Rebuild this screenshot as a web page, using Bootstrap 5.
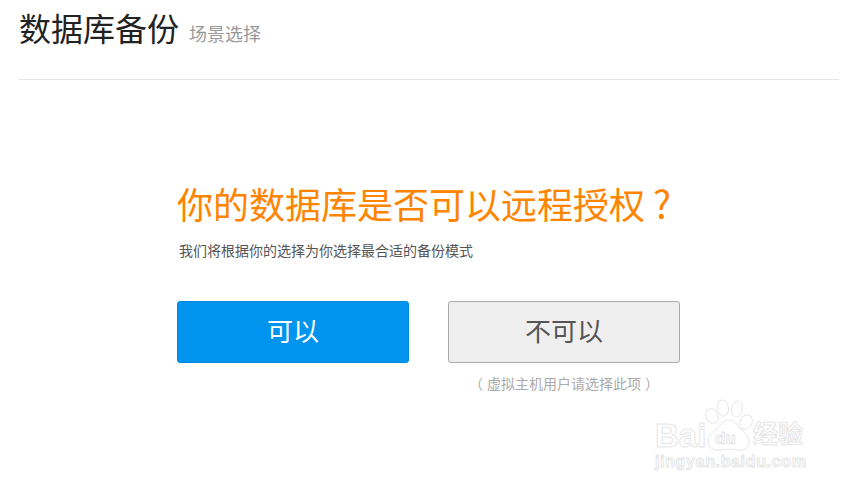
<!DOCTYPE html>
<html lang="zh-CN">
  <head>
    <meta charset="UTF-8" />
    <title>数据库备份</title>
    <link href="https://cdn.jsdelivr.net/npm/bootstrap@5.3.3/dist/css/bootstrap.min.css" rel="stylesheet" />
    <style>
      body {
        background: #fff;
        height: 491px;
        overflow: hidden;
        font-family: "Liberation Sans", "Noto Sans CJK SC", sans-serif;
      }
      .page-wrap { padding: 0 14px 0 19px; }
      .page-head {
        height: 80px;
        padding-top: 10px;
        border-bottom: 1px solid #e5e5e5;
      }
      .page-head h1 { font-size: 32px; line-height: 40px; color: #222; font-weight: 400; margin: 0; }
      .page-head span { font-size: 18px; color: #999; margin-left: 10px; }
      .ask-box { width: 503px; margin: 101px 0 0 158px; }
      .ask-box h2 { height: 52px; font-size: 36px; line-height: 52px; color: #ff8400; font-weight: 400; margin: 0; white-space: nowrap; }
      .ask-box h2 span { font-family: "Noto Sans CJK SC", sans-serif; font-size: 38px; line-height: 1; margin-left: 8px; }
      .ask-tip { font-size: 14px; line-height: 20px; color: #555; margin: 8px 0 0 2px; white-space: nowrap; }
      .choice-row { margin-top: 40px; gap: 39px; }
      .choice { width: 232px; }
      .choice .btn { width: 232px; height: 62px; font-size: 26px; padding: 0; border-radius: 3px; }
      .btn-yes, .btn-yes:hover { background: #0094ee; border-color: #0088dd; color: #fff; }
      .btn-no, .btn-no:hover { background: #efefef; border-color: #aaa; color: #555; }
      .choice-note { font-size: 14px; line-height: 18px; color: #aaa; margin-top: 12px; text-align: center; white-space: nowrap; }
      .wm { position: absolute; left: 654px; top: 399px; width: 160px; height: 75px; }
      .wm span { position: absolute; font-weight: 700; color: #fff; -webkit-text-stroke: 1px #e6e6e6; line-height: 1; white-space: nowrap; }
      .wm svg { position: absolute; left: 0; top: 0; }
      .wm-bai { left: 1px; top: 20px; font-size: 33px; }
      .wm-du { left: 61px; top: 31px; font-size: 17px; }
      .wm-jy { left: 99px; top: 23px; font-size: 25px; }
      .wm-url { left: 1px; top: 55px; font-size: 16px; letter-spacing: .65px; }
    </style>
  </head>
  <body>
    <div class="page-wrap">
      <div class="page-head d-flex align-items-start">
        <h1>数据库备份<span>场景选择</span></h1>
      </div>
      <div class="ask-box">
        <h2>你的数据库是否可以远程授权<span>?</span></h2>
        <p class="ask-tip">我们将根据你的选择为你选择最合适的备份模式</p>
        <div class="d-flex choice-row">
          <div class="choice"><button type="button" class="btn btn-yes">可以</button></div>
          <div class="choice">
            <button type="button" class="btn btn-no">不可以</button>
            <div class="choice-note">（ 虚拟主机用户请选择此项 ）</div>
          </div>
        </div>
      </div>
    </div>
    <div class="wm">
      <svg width="160" height="75" viewBox="0 0 160 75" fill="#fff" stroke="#e6e6e6" stroke-width="1">
        <ellipse cx="58" cy="17" rx="6" ry="7.5" transform="rotate(-30 58 17)" />
        <ellipse cx="69" cy="9" rx="5.5" ry="8" transform="rotate(-8 69 9)" />
        <ellipse cx="83" cy="10" rx="5.5" ry="8" transform="rotate(10 83 10)" />
        <ellipse cx="92" cy="23" rx="6" ry="7.5" transform="rotate(25 92 23)" />
        <path d="M75 21c-6 0-9 5-12 9-4 3-9 6-9 13 0 6 6 9 12 8 6-1 12-1 18 0 6 1 11-2 11-8 0-7-5-10-9-13-3-4-5-9-11-9z" />
      </svg>
      <span class="wm-bai">Bai</span>
      <span class="wm-du">du</span>
      <span class="wm-jy">经验</span>
      <span class="wm-url">jingyan.baidu.com</span>
    </div>
    <script src="https://cdn.jsdelivr.net/npm/bootstrap@5.3.3/dist/js/bootstrap.bundle.min.js"></script>
  </body>
</html>
